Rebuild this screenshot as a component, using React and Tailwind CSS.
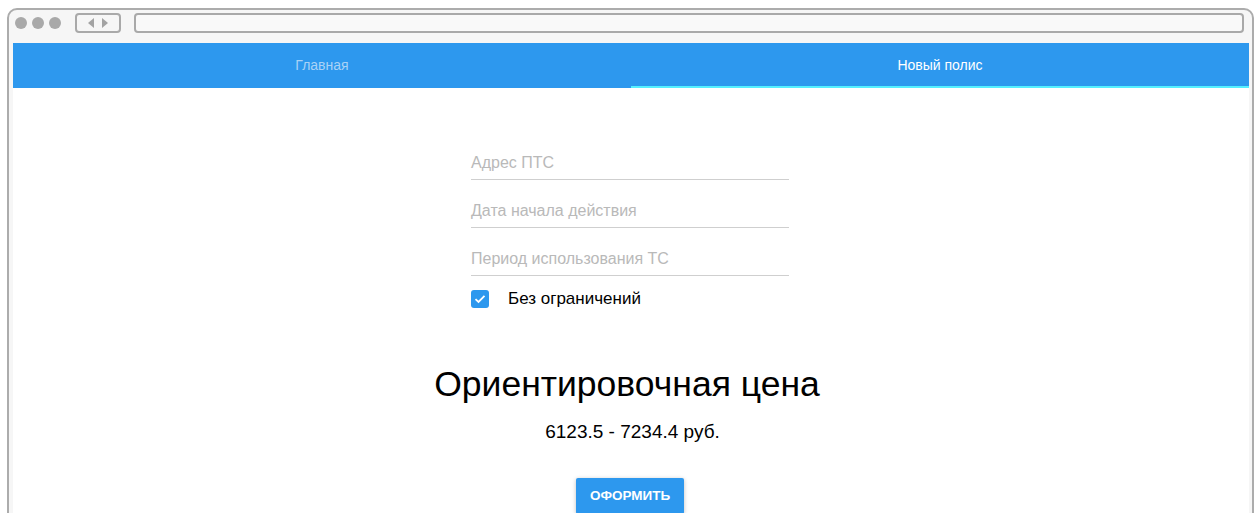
import React, { useState } from "react";

const FIELDS = ["Адрес ПТС", "Дата начала действия", "Период использования ТС"];

function Tabs() {
  const [tab, setTab] = useState(1);
  const items = ["Главная", "Новый полис"];
  return (
    <div className="flex h-[45px] bg-[#2d98ee]">
      {items.map((t, idx) => (
        <button
          key={t}
          onClick={() => setTab(idx)}
          className={
            "flex-1 flex items-center justify-center text-[14px] border-b-2 pt-[2px] " +
            (tab === idx
              ? "text-white border-[#55f0ff]"
              : "text-[#a9d2f6] border-transparent")
          }
        >
          {t}
        </button>
      ))}
    </div>
  );
}

function Chrome() {
  return (
    <div className="h-[33px] pl-[6px] pr-[8px] pt-[3px]">
      <div className="flex items-center h-[20px]">
        <div className="flex gap-[5px]">
          <span className="w-[12px] h-[12px] rounded-full bg-[#a9a9a9]" />
          <span className="w-[12px] h-[12px] rounded-full bg-[#a9a9a9]" />
          <span className="w-[12px] h-[12px] rounded-full bg-[#a9a9a9]" />
        </div>
        <div className="ml-[14px] w-[46px] h-[20px] border-2 border-[#a9a9a9] rounded-[4px] flex items-center justify-center gap-[8px]">
          <svg width="6" height="10" viewBox="0 0 6 10">
            <path d="M6 0 L0 5 L6 10 Z" fill="#a3a3a3" />
          </svg>
          <svg width="6" height="10" viewBox="0 0 6 10">
            <path d="M0 0 L6 5 L0 10 Z" fill="#a3a3a3" />
          </svg>
        </div>
        <div className="ml-[13px] flex-1 h-[20px] border-2 border-[#a9a9a9] rounded-[4px] bg-[#f9f9f9]" />
      </div>
    </div>
  );
}

export default function App() {
  const [unlimited, setUnlimited] = useState(true);
  return (
    <div
      className="h-[513px] overflow-hidden bg-white pt-[8px] pl-[7px]"
      style={{ fontFamily: '"Liberation Sans", Arial, sans-serif' }}
    >
      <div className="w-[1247px] h-[540px] border-2 border-[#acacac] rounded-t-[10px] bg-[#f6f6f6] flex flex-col">
        <Chrome />
        <div className="flex-1 ml-[4px] mr-[3px] bg-white">
          <Tabs />
          <div className="flex flex-col items-center">
            <div className="w-[318px] mt-[44px] mr-[2px]">
              {FIELDS.map((f) => (
                <div
                  key={f}
                  className="h-[48px] flex items-end pb-[6px] border-b border-[#cfcfcf]"
                >
                  <span className="text-[16px] leading-[20px] text-[#b9b9b9]">{f}</span>
                </div>
              ))}
              <label className="mt-[14px] flex items-center h-[18px] cursor-pointer">
                <span
                  onClick={() => setUnlimited(!unlimited)}
                  className={
                    "w-[18px] h-[18px] rounded-[3px] flex items-center justify-center " +
                    (unlimited ? "bg-[#2d98ee]" : "border-2 border-[#888]")
                  }
                >
                  {unlimited && (
                    <svg width="12" height="10" viewBox="0 0 12 10">
                      <path
                        d="M1.5 5.2 L4.5 8 L10.5 1.8"
                        fill="none"
                        stroke="white"
                        strokeWidth="1.8"
                      />
                    </svg>
                  )}
                </span>
                <span className="ml-[19px] text-[17px] text-black">Без ограничений</span>
              </label>
            </div>
            <h1 className="mt-[56px] text-[35.5px] leading-[40px] text-black pr-[8px]">
              Ориентировочная цена
            </h1>
            <div className="mt-[16px] text-[19px] leading-[24px] text-black pl-[3px]">
              6123.5 - 7234.4 руб.
            </div>
            <button className="mt-[34px] w-[108px] h-[36px] rounded-[2px] bg-[#2d98ee] text-white text-[13.5px] font-bold shadow-[0_1px_4px_rgba(0,0,0,0.25)] mr-[2px]">
              ОФОРМИТЬ
            </button>
          </div>
        </div>
      </div>
    </div>
  );
}
